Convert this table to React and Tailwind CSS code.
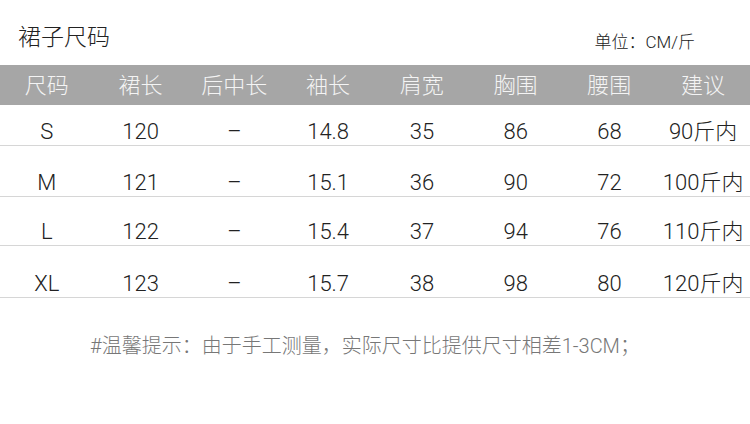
import React from 'react';

const headers = ['尺码', '裙长', '后中长', '袖长', '肩宽', '胸围', '腰围', '建议'];

const rows = [
  ['S', '120', '–', '14.8', '35', '86', '68', '90斤内'],
  ['M', '121', '–', '15.1', '36', '90', '72', '100斤内'],
  ['L', '122', '–', '15.4', '37', '94', '76', '110斤内'],
  ['XL', '123', '–', '15.7', '38', '98', '80', '120斤内'],
];

// row heights taken from the divider positions
const rowH = ['h-[41px]', 'h-[51px]', 'h-[49px]', 'h-[52px]'];

const font = { fontFamily: 'Roboto, "Noto Sans CJK SC", sans-serif' };

export default function App() {
  return (
    <div className="w-[750px] h-[424px] bg-white text-[#333] font-light" style={font}>
      {/* Title line */}
      <div className="flex items-end justify-between h-[65px] pl-[18px] pr-[55px]">
        <div className="text-[23px] leading-none text-[#222] pb-[16px]">裙子尺码</div>
        <div className="text-[17px] leading-none text-[#222] pb-[14px]">单位：CM/斤</div>
      </div>

      {/* Table header */}
      <div className="grid grid-cols-8 h-[40px] bg-[#a6a6a6] items-center text-[22px] text-[#f4f4f4]">
        {headers.map((h) => (
          <div key={h} className="text-center">{h}</div>
        ))}
      </div>

      {/* Rows */}
      {rows.map((r, i) => (
        <div
          key={r[0]}
          className={`grid grid-cols-8 items-end border-b border-[#d6d6d6] text-[22px] leading-none pb-[2px] text-[#222] ${rowH[i]}`}
        >
          {r.map((c, j) => (
            <div key={j} className="text-center">{c}</div>
          ))}
        </div>
      ))}

      {/* Note */}
      <div className="mt-[38px] text-center text-[20px] leading-none text-[#777] pr-[20px]">
        #温馨提示：由于手工测量，实际尺寸比提供尺寸相差1-3CM；
      </div>
    </div>
  );
}
